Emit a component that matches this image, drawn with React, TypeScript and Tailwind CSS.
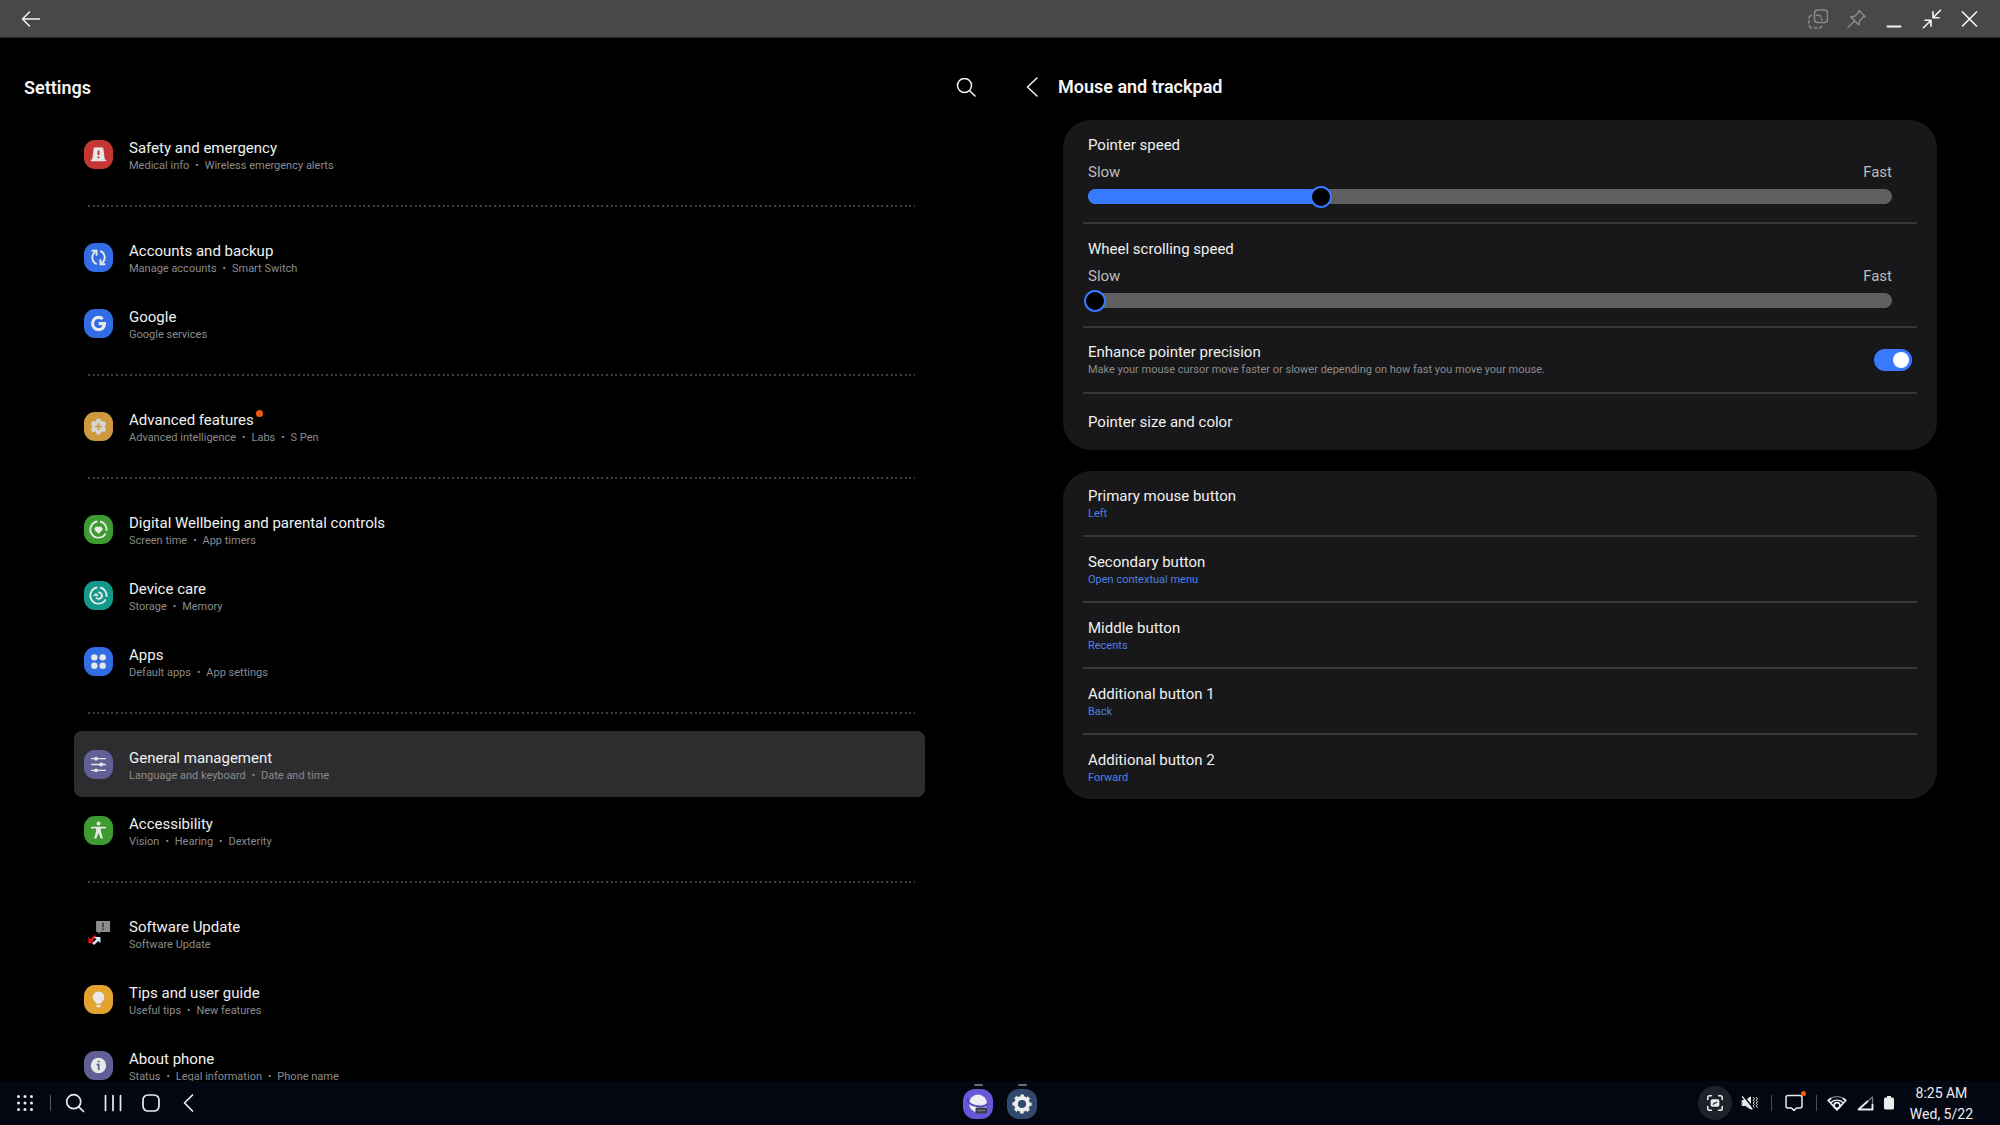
import { Fragment, useState, type ReactNode } from "react";
import clsx from "clsx";

const icons: Record<string, ReactNode> = {
  safety: (
    <>
      <path d="M10.6 8.2h8.8l1.6 12H9z" fill="#e8e8e8" stroke="#e8e8e8" strokeLinejoin="round" />
      <path d="M7.8 21h14.4" stroke="#e8e8e8" strokeWidth="1.8" strokeLinecap="round" />
      <path d="M15 10.8v4.6M15 17v2" stroke="#c53732" strokeWidth="2" />
    </>
  ),
  accounts: (
    <g stroke="#e8e8e8" strokeWidth="1.9" fill="none">
      <path d="M13.2 21.9A7.5 7.5 0 0 1 11.6 9" />
      <path d="M16.8 8.1A7.5 7.5 0 0 1 18.4 21" />
      <path d="M8 8h5v5.2M22 22h-5v-5.2" />
    </g>
  ),
  google: (
    <path
      d="M15.2 13.5h7.5c.1.5.1 1 .1 1.5 0 4.6-3.1 7.9-7.7 7.9A7.9 7.9 0 0 1 15.1 7.1c2.100 0 3.900.8 5.300 2.100l-2.300 2.200a4.300 4.300 0 0 0-3-1.100 4.700 4.700 0 0 0 0 9.400c2.400 0 3.600-1.500 3.900-3h-3.800z"
      fill="#e8e8e8"
    />
  ),
  advanced: (
    <>
      <g fill="#d6d6d0">
        <circle cx="15" cy="15" r="6.4" />
        <circle cx="15" cy="9.3" r="2.7" />
        <circle cx="15" cy="20.7" r="2.7" />
        <circle cx="10.1" cy="12.2" r="2.7" />
        <circle cx="19.9" cy="12.2" r="2.7" />
        <circle cx="10.1" cy="17.8" r="2.7" />
        <circle cx="19.9" cy="17.8" r="2.7" />
      </g>
      <path d="M15 11.5v7M11.5 15h7" stroke="#cf9a3f" strokeWidth="1.6" />
    </>
  ),
  wellbeing: (
    <>
      <path d="M13.8 6.700A8.400 8.400 0 1 0 22.400 19" stroke="#e8e8e8" strokeWidth="1.9" fill="none" />
      <path d="M16.600 6.700a8.400 8.400 0 0 1 6.600 9.800" stroke="#e8e8e8" strokeWidth="1.9" fill="none" />
      <path d="M15 19.200l-3.600-3.500a2.300 2.300 0 0 1 3.600-2.800 2.300 2.300 0 0 1 3.600 2.800z" fill="#e8e8e8" stroke="#e8e8e8" strokeWidth=".6" />
    </>
  ),
  care: (
    <g stroke="#e8e8e8" strokeWidth="1.9" fill="none">
      <path d="M13.800 6.700A8.400 8.400 0 1 0 22.400 19" />
      <path d="M16.600 6.700a8.400 8.400 0 0 1 6.600 9.800" />
      <path d="M14.600 11.800a3.300 3.300 0 1 1-2 5.200" />
      <path d="M10 15.200l2.400-2.400 2.300 2.400z" fill="#e8e8e8" strokeWidth=".8" />
    </g>
  ),
  apps: (
    <g fill="#e8e8e8">
      <circle cx="10.7" cy="10.7" r="3.3" />
      <circle cx="19.3" cy="10.7" r="3.3" />
      <circle cx="10.7" cy="19.3" r="3.3" />
      <circle cx="19.3" cy="19.3" r="3.3" />
    </g>
  ),
  general: (
    <g stroke="#e8e8e8" strokeWidth="1.3" strokeLinecap="round" fill="#e8e8e8">
      <path d="M7.800 9h14.400M7.800 15h14.400M7.800 21h14.400" />
      <circle cx="12.5" cy="9" r="1.3" />
      <circle cx="17.8" cy="15" r="1.3" />
      <circle cx="12.5" cy="21" r="1.3" />
    </g>
  ),
  accessibility: (
    <>
      <circle cx="15" cy="7.8" r="2" fill="#e8e8e8" />
      <path d="M8 12h14" stroke="#e8e8e8" strokeWidth="1.9" strokeLinecap="round" />
      <path d="M12.600 12h4.800v3.600l2.200 7.800h-2.300L15 17.600l-2.300 5.800h-2.300l2.200-7.800z" fill="#e8e8e8" />
    </>
  ),
  update: (
    <>
      <path d="M12.500 2H27v11.500H17l-2 2.500v-2.500h-2.500z" fill="#8d8d8d" />
      <path d="M19.700 4v4.500M19.700 9.700v1.600" stroke="#3a3a3a" strokeWidth="1.700" />
      <path d="M12 17.500l-4.500 4.500" stroke="#e01515" strokeWidth="2.800" />
      <path d="M4.500 18.500v6.500H11z" fill="#e01515" />
      <path d="M9.500 26l4.500-4.500" stroke="#d4f1f8" strokeWidth="2.600" />
      <path d="M10.500 18.500h6.500V25z" fill="#d4f1f8" />
    </>
  ),
  tips: (
    <g fill="#e8e8e8">
      <circle cx="15" cy="12.6" r="6" />
      <path d="M11.500 16h7l-1.300 3.300h-4.400z" />
      <path d="M12.400 20.600h5.200l-1 2.300h-3.200z" />
    </g>
  ),
  about: (
    <>
      <circle cx="15" cy="15" r="8" fill="#e8e8e8" />
      <circle cx="15.2" cy="10.9" r="1.1" fill="#625f97" />
      <path d="M13 14h2.200v5.600" stroke="#625f97" strokeWidth="1.8" fill="none" />
    </>
  ),
};

const groups = [
  [{ icon: "safety", color: "bg-[#c53732]", label: "Safety and emergency", info: ["Medical info", "Wireless emergency alerts"] }],
  [
    { icon: "accounts", color: "bg-[#336de6]", label: "Accounts and backup", info: ["Manage accounts", "Smart Switch"] },
    { icon: "google", color: "bg-[#336de6]", label: "Google", info: ["Google services"] },
  ],
  [{ icon: "advanced", color: "bg-[#cf9a3f]", label: "Advanced features", badge: true, info: ["Advanced intelligence", "Labs", "S Pen"] }],
  [
    { icon: "wellbeing", color: "bg-[#3d9c31]", label: "Digital Wellbeing and parental controls", info: ["Screen time", "App timers"] },
    { icon: "care", color: "bg-[#12998a]", label: "Device care", info: ["Storage", "Memory"] },
    { icon: "apps", color: "bg-[#336de6]", label: "Apps", info: ["Default apps", "App settings"] },
  ],
  [
    { icon: "general", color: "bg-[#625f97]", label: "General management", active: true, info: ["Language and keyboard", "Date and time"] },
    { icon: "accessibility", color: "bg-[#3d9c31]", label: "Accessibility", info: ["Vision", "Hearing", "Dexterity"] },
  ],
  [
    { icon: "update", color: "bg-black", label: "Software Update", info: ["Software Update"] },
    { icon: "tips", color: "bg-[#e2a32f]", label: "Tips and user guide", info: ["Useful tips", "New features"] },
    { icon: "about", color: "bg-[#625f97]", label: "About phone", info: ["Status", "Legal information", "Phone name"] },
  ],
];

const mouseButtons = [
  { label: "Primary mouse button", value: "Left" },
  { label: "Secondary button", value: "Open contextual menu" },
  { label: "Middle button", value: "Recents" },
  { label: "Additional button 1", value: "Back" },
  { label: "Additional button 2", value: "Forward" },
];

const Stroke = ({ children, className, width = 2 }: { children: ReactNode; className?: string; width?: number }) => (
  <svg
    viewBox="0 0 20 20"
    className={clsx("shrink-0", className ?? "size-5")}
    fill="none"
    stroke="currentColor"
    strokeWidth={width}
    strokeLinecap="round"
    strokeLinejoin="round"
  >
    {children}
  </svg>
);

const TitleBar = () => (
  <header className="flex h-[38px] shrink-0 items-center justify-between border-b border-[#2a2a2b] bg-[#484849] px-5 text-[#f4f4f4]">
    <button aria-label="Back">
      <Stroke width={1.5}>
        <path d="M20 10H2.500M9.500 3L2.500 10l7 7" />
      </Stroke>
    </button>
    <div className="flex gap-[18px]">
      <button aria-label="Opacity" className="text-[#8a8a8b]">
        <Stroke width={1.5}>
          <rect x="6.500" y="1" width="13" height="12.500" rx="3" />
          <path d="M3.500 6.200A3 3 0 0 0 1 9M1 11.500v2.500M1.200 16.500A3 3 0 0 0 3.500 19M6.500 19H9M11.500 19a3 3 0 0 0 2.300-1.800M8.500 6.200h1.500a3 3 0 0 1 3 1.500M13.800 9.500v1.500" />
        </Stroke>
      </button>
      <button aria-label="Pin" className="text-[#8a8a8b]">
        <Stroke width={1.5}>
          <path d="M13 1.500l6 6-2.200.8-3.300 3.600-.6 4L4.700 8l4-.7 3.500-3.300zM8.500 12L2 18.500" />
        </Stroke>
      </button>
      <button aria-label="Minimize">
        <Stroke>
          <path d="M3.500 17.500h13" />
        </Stroke>
      </button>
      <button aria-label="Restore">
        <Stroke width={1.6}>
          <path d="M18.500 1.200L11.200 8.500M11 2.800v6h6M1.500 18.800L8.800 11.500M3 11.200h6v6" />
        </Stroke>
      </button>
      <button aria-label="Close">
        <Stroke width={1.7}>
          <path d="M2.500 3l14 14M16.500 3l-14 14" />
        </Stroke>
      </button>
    </div>
  </header>
);

const SettingsList = () => (
  <section className="flex min-h-0 flex-1 flex-col overflow-hidden">
    <div className="flex h-[83px] shrink-0 items-center justify-between px-6 pt-4">
      <h1 className="text-lg font-semibold text-[#f4f4f4]">Settings</h1>
      <button aria-label="Search settings" className="text-[#f4f4f4]">
        <Stroke width={1.5}>
          <circle cx="8.5" cy="7.5" r="7" />
          <path d="M13.700 12.800l5.300 5.200" />
        </Stroke>
      </button>
    </div>
    <nav className="pr-[75px] pl-[74px]">
      {groups.map((group, index) => (
        <Fragment key={index}>
          {index > 0 && (
            <div className="mt-[18px] mr-[10px] mb-[17px] ml-[14px] h-[2px] bg-[repeating-linear-gradient(to_right,#3c3c3c_0_2px,transparent_2px_5px,#3c3c3c_5px_7px,transparent_7px_9px,#3c3c3c_9px_11px,transparent_11px_14px)]" />
          )}
          {group.map((item) => (
            <a
              key={item.label}
              href="#"
              className={clsx("flex h-[66px] items-center gap-4 rounded-lg px-[10px]", item.active && "bg-[#2d2d2f]")}
            >
              <span className={clsx("size-[29px] shrink-0 rounded-[11px]", item.color)}>
                <svg viewBox="0 0 30 30" className="size-full" fill="none">
                  {icons[item.icon]}
                </svg>
              </span>
              <span className="flex flex-col pt-[3px]">
                <span className="flex items-start text-[15px] leading-5 text-[#f0f0f0]">
                  {item.label}
                  {item.badge && <span className="ml-[2px] size-[7px] rounded-full bg-[#ee5a17]" />}
                </span>
                <span className="flex gap-[6px] text-[11px] leading-4 text-[#8b8b8d]">
                  {item.info.map((text, i) => (
                    <Fragment key={text}>
                      {i > 0 && <span className="text-[10px]">•</span>}
                      <span>{text}</span>
                    </Fragment>
                  ))}
                </span>
              </span>
            </a>
          ))}
        </Fragment>
      ))}
    </nav>
  </section>
);

const Divider = () => <div className="mx-5 h-[2px] bg-[#38383a]" />;

const SpeedSlider = ({ id, label, initial }: { id: string; label: string; initial: number }) => {
  const [value, setValue] = useState(initial);

  return (
    <div className="flex h-[102px] flex-col pt-[15px] pr-[45px] pl-[25px]">
      <label htmlFor={id} className="text-[15px] leading-5 text-[#f0f0f0]">
        {label}
      </label>
      <div className="mt-[7px] flex justify-between text-[15px] leading-5 text-[#bcbcbd]">
        <span>Slow</span>
        <span>Fast</span>
      </div>
      <div className="relative mt-[7px] h-[15px] rounded-full bg-[#5f5f62]">
        <div className="h-full rounded-full bg-[#387aff]" style={{ width: `${(value / 7) * 100}%` }} />
        {/* the thumb hangs 4px over both ends of the track */}
        <input
          id={id}
          type="range"
          min={0}
          max={7}
          value={value}
          onChange={(e) => setValue(Number(e.target.value))}
          className="absolute -top-1 -left-1 h-[23px] w-[calc(100%+8px)] appearance-none bg-transparent [&::-webkit-slider-thumb]:size-[22px] [&::-webkit-slider-thumb]:appearance-none [&::-webkit-slider-thumb]:rounded-full [&::-webkit-slider-thumb]:border-2 [&::-webkit-slider-thumb]:border-[#387aff] [&::-webkit-slider-thumb]:bg-black"
        />
      </div>
    </div>
  );
};

const MousePanel = () => (
  <section className="min-h-0 flex-1 overflow-hidden">
    <div className="flex h-[82px] items-center gap-4 pt-4 pl-[22px]">
      <button aria-label="Back" className="text-[#f4f4f4]">
        <Stroke width={1.5}>
          <path d="M15 1l-9.500 9L15 19" />
        </Stroke>
      </button>
      <h2 className="text-lg font-semibold text-[#f4f4f4]">Mouse and trackpad</h2>
    </div>
    <div className="flex flex-col gap-[21px] px-[63px]">
      <div className="rounded-[28px] bg-[#18181a]">
        <SpeedSlider id="pointer-speed" label="Pointer speed" initial={2} />
        <Divider />
        <SpeedSlider id="wheel-speed" label="Wheel scrolling speed" initial={0} />
        <Divider />
        <div className="flex h-16 items-center justify-between px-[25px]">
          <label htmlFor="precision" className="flex flex-col">
            <span className="text-[15px] leading-5 text-[#f0f0f0]">Enhance pointer precision</span>
            <span className="text-[11px] leading-4 text-[#8b8b8d]">
              Make your mouse cursor move faster or slower depending on how fast you move your mouse.
            </span>
          </label>
          <input
            id="precision"
            type="checkbox"
            role="switch"
            defaultChecked
            className="flex h-[22px] w-[38px] appearance-none items-center rounded-full bg-[#5f5f62] px-[3px] before:size-4 before:rounded-full before:bg-white checked:justify-end checked:bg-[#387aff]"
          />
        </div>
        <Divider />
        <button className="flex h-14 w-full items-center px-[25px] text-[15px] text-[#f0f0f0]">Pointer size and color</button>
      </div>
      <div className="rounded-[28px] bg-[#18181a]">
        {mouseButtons.map((item, index) => (
          <Fragment key={item.label}>
            {index > 0 && <Divider />}
            <button className="flex h-16 w-full flex-col justify-center px-[25px] pt-[2px] text-left">
              <span className="text-[15px] leading-5 text-[#f0f0f0]">{item.label}</span>
              <span className="text-[11px] leading-4 text-[#4b80e4]">{item.value}</span>
            </button>
          </Fragment>
        ))}
      </div>
    </div>
  </section>
);

const Taskbar = () => (
  <footer className="grid h-11 shrink-0 grid-cols-[1fr_auto_1fr] items-center bg-[#030712] text-[#ececec]">
    <div className="flex items-center pl-[15px]">
      <button aria-label="All apps">
        <svg viewBox="0 0 20 20" className="size-5" fill="currentColor">
          {[3.5, 10, 16.5].map((y) => [3.5, 10, 16.5].map((x) => <circle key={`${x}-${y}`} cx={x} cy={y} r="1.5" />))}
        </svg>
      </button>
      <span className="mr-[14px] ml-[15px] h-4 w-px bg-[#55585f]" />
      <div className="flex gap-[18px]">
        <button aria-label="Search">
          <Stroke width={1.7}>
            <circle cx="8.7" cy="8.7" r="7" />
            <path d="M13.800 13.800L18.500 18.500" />
          </Stroke>
        </button>
        <button aria-label="Recents">
          <Stroke width={1.7}>
            <path d="M2.500 2.500v15M10 2.500v15M17.500 2.500v15" />
          </Stroke>
        </button>
        <button aria-label="Home">
          <Stroke width={1.7}>
            <rect x="2" y="2" width="16" height="16" rx="5" />
          </Stroke>
        </button>
        <button aria-label="Go back">
          <Stroke width={1.7}>
            <path d="M13.500 2L5.500 10l8 8" />
          </Stroke>
        </button>
      </div>
    </div>
    <div className="flex gap-[14px] pb-[3px]">
      <button aria-label="Internet Beta" className="flex flex-col items-center gap-[3px]">
        <span className="h-[2px] w-[9px] rounded-full bg-[#6a6d74]" />
        <svg viewBox="0 0 30 30" className="size-[30px]">
          <rect width="30" height="30" rx="12" fill="#6658d8" />
          <circle cx="15" cy="14.5" r="9" fill="#f0f0f2" />
          <path d="M5.200 9.500c-1.600 3.500 2.800 7 9.300 7.800 4 .5 8.300 0 10.200-2.600" fill="none" stroke="#5546c4" strokeWidth="2" />
          <rect x="12.500" y="18.500" width="11.500" height="6" rx="1.5" fill="#3c3b4a" />
          <path d="M14.500 21.500h7.500" stroke="#9a9aa4" strokeWidth="1.500" strokeDasharray="1.300 .7" />
        </svg>
      </button>
      <button aria-label="Settings app" className="flex flex-col items-center gap-[3px]">
        <span className="h-[2px] w-[9px] rounded-full bg-[#6a6d74]" />
        <svg viewBox="0 0 30 30" className="size-[30px]">
          <rect width="30" height="30" rx="12" fill="#314a6c" />
          <circle cx="15" cy="15" r="6" fill="none" stroke="#ededed" strokeWidth="3.8" />
          <circle cx="15" cy="15" r="8.3" fill="none" stroke="#ededed" strokeWidth="2.6" strokeDasharray="3.400 3.118" strokeDashoffset="1.700" />
        </svg>
      </button>
    </div>
    <div className="flex items-center justify-end pr-[27px]">
      <button aria-label="Screenshot" className="grid size-[34px] place-items-center rounded-full bg-[#20222a]">
        <Stroke width={1.7} className="size-[18px]">
          <path d="M2 6V4a2 2 0 0 1 2-2h2M14 2h2a2 2 0 0 1 2 2v2M18 14v2a2 2 0 0 1-2 2h-2M6 18H4a2 2 0 0 1-2-2v-2" />
          <rect x="6" y="6.700" width="8" height="6.600" rx="1" fill="currentColor" />
          <path d="M8 11.500l1.500-1.500h1.200l1.300-1" stroke="#20222a" strokeWidth="1.300" />
        </Stroke>
      </button>
      <svg viewBox="0 0 18 18" className="ml-[9px] size-[18px]" fill="none" stroke="currentColor" strokeLinecap="round">
        <path d="M1.500 6.500h3L9.500 3v12l-5-3.500h-3z" fill="currentColor" />
        <path d="M2.500 2l10 12.500" stroke="#030712" strokeWidth="1.600" />
        <path d="M1.500 2.800l9.500 12.200" strokeWidth="1.300" />
        <path d="M12.300 3.500l1 1.400-1 1.400 1 1.400-1 1.400 1 1.400-1 1.400 1 1.400M15.300 3.500l1 1.400-1 1.400 1 1.400-1 1.400 1 1.400-1 1.400 1 1.400" strokeWidth="1" />
      </svg>
      <span className="ml-3 h-4 w-px bg-[#4a4d55]" />
      <button aria-label="Notifications" className="relative ml-3">
        <Stroke width={1.5}>
          <path d="M4 2.500h12a2 2 0 0 1 2 2v8.500a2 2 0 0 1-2 2h-3.500L10 17.500 7.500 15H4a2 2 0 0 1-2-2V4.500a2 2 0 0 1 2-2z" />
        </Stroke>
        <span className="absolute -top-[2px] -right-[2px] size-[5px] rounded-full bg-[#fb5b0a]" />
      </button>
      <span className="ml-3 h-4 w-px bg-[#4a4d55]" />
      <div className="ml-[10px] flex items-center gap-[9px]">
        <svg viewBox="0 0 20 18" className="h-[18px] w-5" fill="none" stroke="currentColor" strokeWidth="1.7" strokeLinejoin="round">
          <path d="M1.200 6.300C6 1.300 14 1.300 18.800 6.300" stroke="#777a80" strokeWidth="1.300" />
          <path d="M4.200 4.300L1.200 6.500 10 15.800l8.800-9.300-3-2.200" />
          <path d="M3.600 9a8.500 8.500 0 0 1 12.800 0" strokeWidth="1.300" />
          <circle cx="10" cy="11.500" r="2.900" fill="#030712" />
        </svg>
        <svg viewBox="0 0 18 18" className="size-[18px]" fill="none" stroke="currentColor" strokeWidth="1.8" strokeLinejoin="round">
          <path d="M16.500 16V3L12 7" stroke="#777a80" strokeWidth="1.300" />
          <path d="M12 7L2.500 15.500h14V10" />
        </svg>
        <svg viewBox="0 0 12 16" className="h-4 w-3" fill="currentColor">
          <path d="M4 1h4v1.500h1.500a1.500 1.500 0 0 1 1.500 1.500v9a1.500 1.500 0 0 1-1.500 1.500h-7A1.500 1.500 0 0 1 1 13V4a1.500 1.500 0 0 1 1.500-1.500H4z" />
        </svg>
      </div>
      <time className="ml-[15px] pt-[2px] text-center text-sm leading-[21px]">
        8:25 AM
        <br />
        Wed, 5/22
      </time>
    </div>
  </footer>
);

const App = () => (
  <div className="flex h-screen flex-col overflow-hidden bg-black font-[Roboto,sans-serif]">
    <TitleBar />
    <main className="flex min-h-0 flex-1">
      <SettingsList />
      <MousePanel />
    </main>
    <Taskbar />
  </div>
);

export default App;
